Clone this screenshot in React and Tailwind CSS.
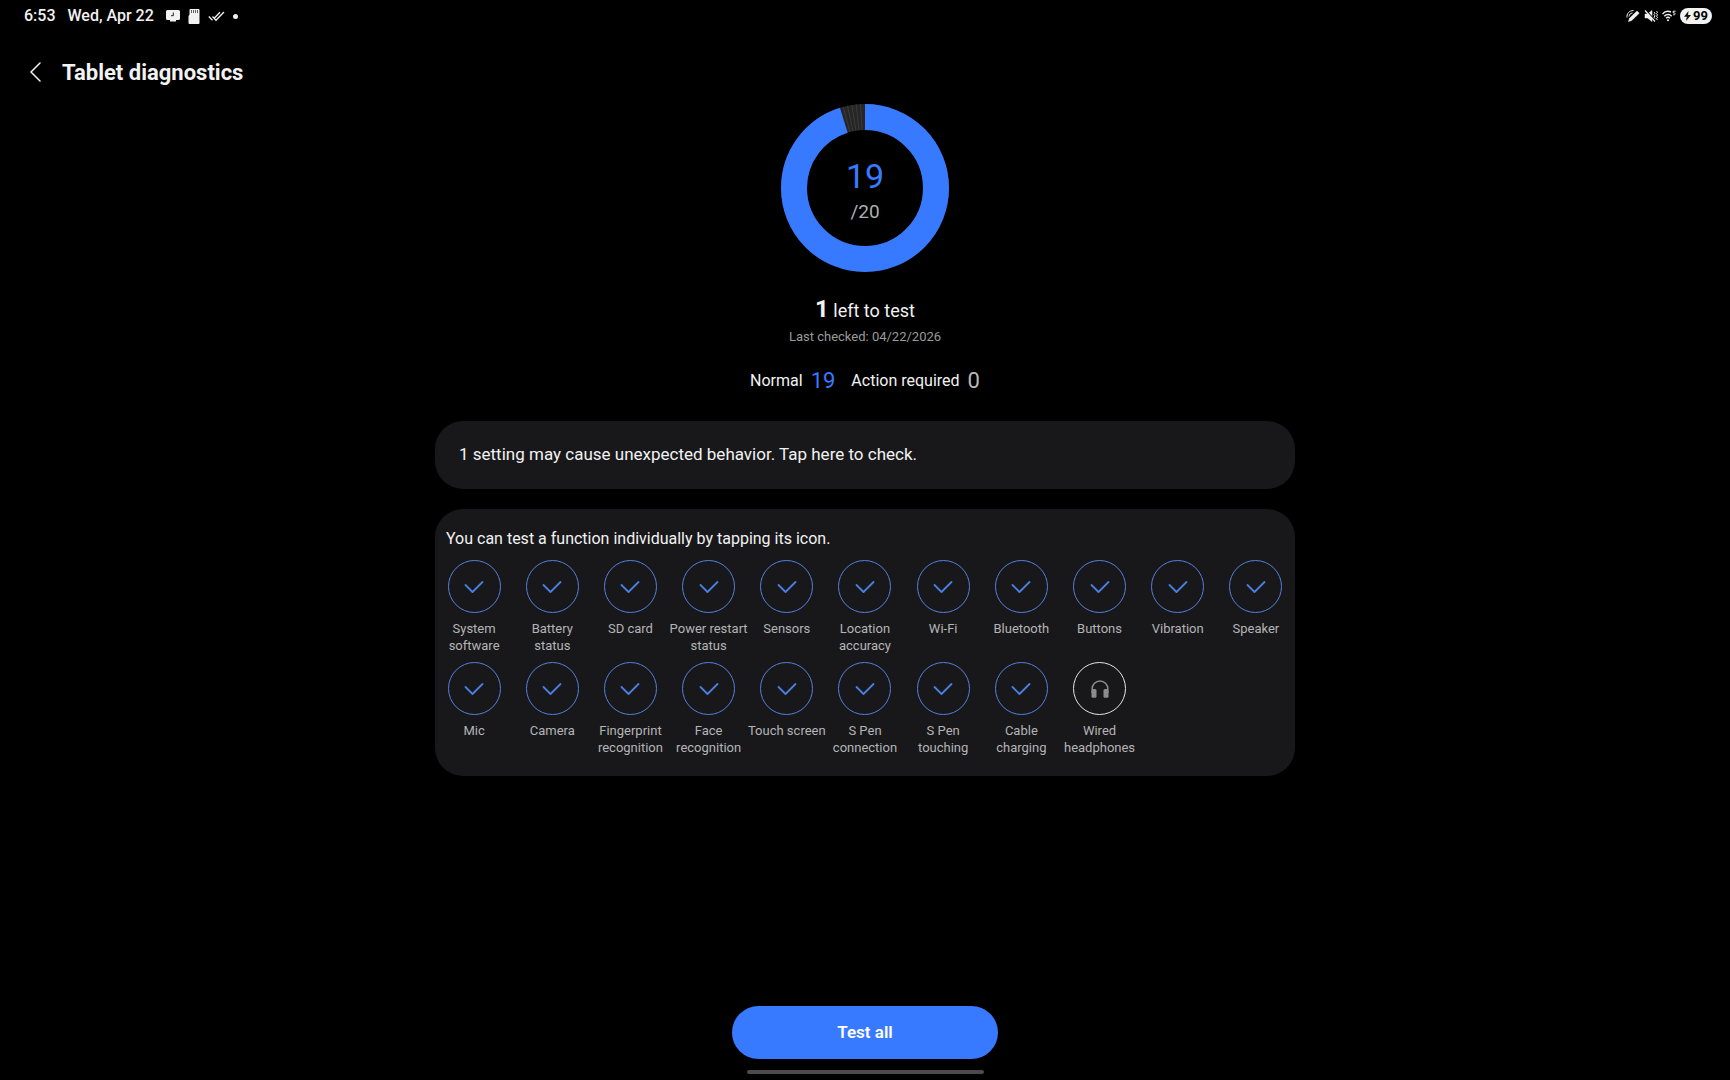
import { useState } from 'react';

const TESTS = [
  { name: 'System software', done: true },
  { name: 'Battery status', done: true },
  { name: 'SD card', done: true },
  { name: 'Power restart status', done: true },
  { name: 'Sensors', done: true },
  { name: 'Location accuracy', done: true },
  { name: 'Wi-Fi', done: true },
  { name: 'Bluetooth', done: true },
  { name: 'Buttons', done: true },
  { name: 'Vibration', done: true },
  { name: 'Speaker', done: true },
  { name: 'Mic', done: true },
  { name: 'Camera', done: true },
  { name: 'Fingerprint recognition', done: true },
  { name: 'Face recognition', done: true },
  { name: 'Touch screen', done: true },
  { name: 'S Pen connection', done: true },
  { name: 'S Pen touching', done: true },
  { name: 'Cable charging', done: true },
  { name: 'Wired headphones', done: false },
];

const StatusBar = () => (
  <div className="flex h-8 items-center justify-between pr-[18px] pl-6 text-base font-medium text-[#f2f2f2]">
    <div className="flex items-center">
      <span>6:53</span>
      <span className="ml-3">Wed, Apr 22</span>
      <svg className="ml-3" width="14" height="12" viewBox="0 0 14 12">
        <path d="M1.5 0h11A1.5 1.5 0 0 1 14 1.5v7a1.5 1.5 0 0 1-1.5 1.5H10v1.500H4V10H1.500A1.500 1.500 0 0 1 0 8.500v-7A1.500 1.500 0 0 1 1.500 0z" fill="#f2f2f2" />
        <path d="M7.300 2.500v3.200H5" fill="none" stroke="#222" strokeWidth="1" />
      </svg>
      <svg className="ml-2" width="12" height="15" viewBox="0 0 12 15">
        <path d="M2.500 0H10.500a1 1 0 0 1 1 1v13a1 1 0 0 1-1 1h-9a1 1 0 0 1-1-1V7l1-1.500V1a1 1 0 0 1 1-1z" fill="#f2f2f2" />
        <path d="M3.500 1v3M5.500 1v3M7.500 1v3M9.500 1v3" stroke="#222" strokeWidth="0.700" />
      </svg>
      <svg className="ml-2" width="17" height="11" viewBox="0 0 17 11" fill="none" stroke="#f2f2f2" strokeWidth="1.300">
        <path d="M0.800 5.500l3.700 3.700M4.500 5.500l3.500 3.700 8-8.200M6.200 7.200l5.800-6" />
      </svg>
      <span className="ml-2 size-[5px] rounded-full bg-[#f2f2f2]" />
    </div>
    <div className="flex items-center gap-1">
      <svg width="14" height="14" viewBox="0 0 14 14" fill="none" stroke="#f2f2f2">
        <path d="M2.500 12.500l1-3.200 7.500-7.300 2.200 2.200L5.700 11.500z" fill="#f2f2f2" strokeWidth="0.500" />
        <path d="M1 8.500C.5 5 3 1.500 7.500 1.500M3 7.500c.2-2 1.500-3.300 3.500-3.500" strokeWidth="1" />
      </svg>
      <svg width="14" height="14" viewBox="0 0 14 14" fill="none" stroke="#f2f2f2">
        <path d="M1 5h2.500L8 1.500v11L3.500 9H1z" fill="#f2f2f2" strokeWidth="0.500" />
        <path d="M2 1.500l10 11" stroke="#000" strokeWidth="1.500" />
        <path d="M1 1.500l10 11" strokeWidth="1.200" />
        <path d="M10 3l1 1.300-1 1.300 1 1.300-1 1.300 1 1.300M12.500 2l1 1.300-1 1.300 1 1.300-1 1.300 1 1.300-1 1.300 1 1.300" strokeWidth="1" />
      </svg>
      <svg width="14" height="12" viewBox="0 0 14 12" fill="none" stroke="#f2f2f2" strokeWidth="1.400">
        <path d="M0.500 4C2.800 1.300 6 .8 9 2M2.300 6.200c2-2.200 5.400-2.200 7.400 0M4.100 8.300c1.200-1.200 2.600-1.200 3.800 0" />
        <circle cx="6" cy="10.200" r="1" fill="#f2f2f2" stroke="none" />
        <path d="M13.500 1.200h-2.300v1.700c2.700-.3 2.700 2.300 0 1.900" strokeWidth="1" />
      </svg>
      <div className="flex h-4 items-center rounded-full bg-[#f2f2f2] px-1 text-[13px] font-bold text-black">
        <svg width="7" height="10" viewBox="0 0 7 10">
          <path d="M4.500 0L0 5.800h2.800L2 10l5-6H4z" fill="#111" />
        </svg>
        <span className="ml-[2px]">99</span>
      </div>
    </div>
  </div>
);

const Donut = ({ done, total }) => {
  const radius = 71;
  const length = 2 * Math.PI * radius;
  const gap = (length * (total - done)) / total;

  return (
    <div className="grid size-42 place-items-center">
      <svg className="col-start-1 row-start-1" width="168" height="168" viewBox="0 0 168 168" fill="none" strokeWidth="26">
        <circle cx="84" cy="84" r={radius} stroke="#262626" />
        <g stroke="#3a3a3a" strokeWidth="1">
          <path d="M80.950 26.080L79.600 .1M77.930 26.320L75.220 .46M74.930 26.700L70.860 1.030M71.940 27.270L66.540 1.840M69 27.980L62.260 2.860" />
        </g>
        <circle
          cx="84"
          cy="84"
          r={radius}
          stroke="#387aff"
          strokeDasharray={`${length - gap} ${gap}`}
          transform="rotate(-90 84 84)"
        />
      </svg>
      <div className="col-start-1 row-start-1 flex flex-col items-center pt-3">
        <span className="text-[34px] leading-9 text-[#387aff]">{done}</span>
        <span className="text-[19px] leading-9 text-[#b0b0b0]">/{total}</span>
      </div>
    </div>
  );
};

const TestItem = ({ name, done }) => (
  <button type="button" className="flex min-h-[94px] flex-col items-center">
    <span
      className={
        done
          ? 'grid size-[53px] place-items-center rounded-full border border-[#5580dc] text-[#4a7ee0]'
          : 'grid size-[53px] place-items-center rounded-full border border-[#e6e6e6] text-[#8c8c8e]'
      }
    >
      {done ? (
        <svg width="20" height="14" viewBox="0 0 20 14" fill="none" stroke="currentColor" strokeWidth="1.800" strokeLinecap="round" strokeLinejoin="round">
          <path d="M1.500 5l7 7L18.500 2" />
        </svg>
      ) : (
        <svg width="18" height="18" viewBox="0 0 18 18" fill="currentColor">
          <path d="M1.200 13V8.800a7.800 7.800 0 0 1 15.600 0V13" fill="none" stroke="currentColor" strokeWidth="1.500" />
          <rect x="0.500" y="9" width="5" height="8.700" rx="1.500" />
          <rect x="12.500" y="9" width="5" height="8.700" rx="1.500" />
        </svg>
      )}
    </span>
    <span className="mt-[7px] text-[13px] leading-[17px] text-[#b4b4b6]">{name}</span>
  </button>
);

const App = () => {
  const [tests, setTests] = useState(TESTS);
  const doneCount = tests.filter((test) => test.done).length;

  const testAll = () => setTests(tests.map((test) => ({ ...test, done: true })));

  return (
    <div className="flex min-h-screen flex-col bg-black font-[Roboto,sans-serif] text-[#f2f2f2]">
      <StatusBar />

      <header className="flex h-[72px] items-center pt-2 pl-7">
        <button type="button" aria-label="Back" className="flex h-10 w-8 items-center">
          <svg width="16" height="20" viewBox="0 0 16 20" fill="none" stroke="#f2f2f2" strokeWidth="1.500" strokeLinecap="round">
            <path d="M12 1L3 10l9 9" />
          </svg>
        </button>
        <h1 className="ml-[2px] text-[22px] font-bold">Tablet diagnostics</h1>
      </header>

      <main className="mx-auto flex w-full max-w-[860px] flex-col items-center">
        <Donut done={doneCount} total={tests.length} />

        <p className="mt-[21px] text-lg leading-8">
          <span className="text-2xl font-bold">{tests.length - doneCount}</span> left to test
        </p>
        <p className="text-[13px] leading-5 text-[#9a9a9a]">Last checked: 04/22/2026</p>

        <div className="mt-[18px] flex items-center text-base leading-8">
          <span>Normal</span>
          <span className="ml-2 text-[22px] text-[#387aff]">{doneCount}</span>
          <span className="ml-4">Action required</span>
          <span className="ml-2 text-[22px] text-[#b8b8b8]">0</span>
        </div>

        <button type="button" className="mt-6 h-17 w-full rounded-[28px] bg-[#18181a] px-6 text-left text-[17px]">
          1 setting may cause unexpected behavior. Tap here to check.
        </button>

        <section className="mt-5 w-full rounded-[28px] bg-[#18181a] pt-4 pb-5">
          <p className="px-[11px] text-base leading-7">You can test a function individually by tapping its icon.</p>
          <div className="mt-[7px] grid grid-cols-11 gap-y-2">
            {tests.map((test) => (
              <TestItem key={test.name} name={test.name} done={test.done} />
            ))}
          </div>
        </section>
      </main>

      <footer className="mt-auto flex flex-col items-center pb-[6px]">
        <button type="button" onClick={testAll} className="h-[53px] w-[266px] rounded-full bg-[#387aff] text-[17px] font-semibold text-white">
          Test all
        </button>
        <div className="mt-[11px] h-1 w-[237px] rounded-full bg-[#4d4a49]" />
      </footer>
    </div>
  );
};

export default App;
